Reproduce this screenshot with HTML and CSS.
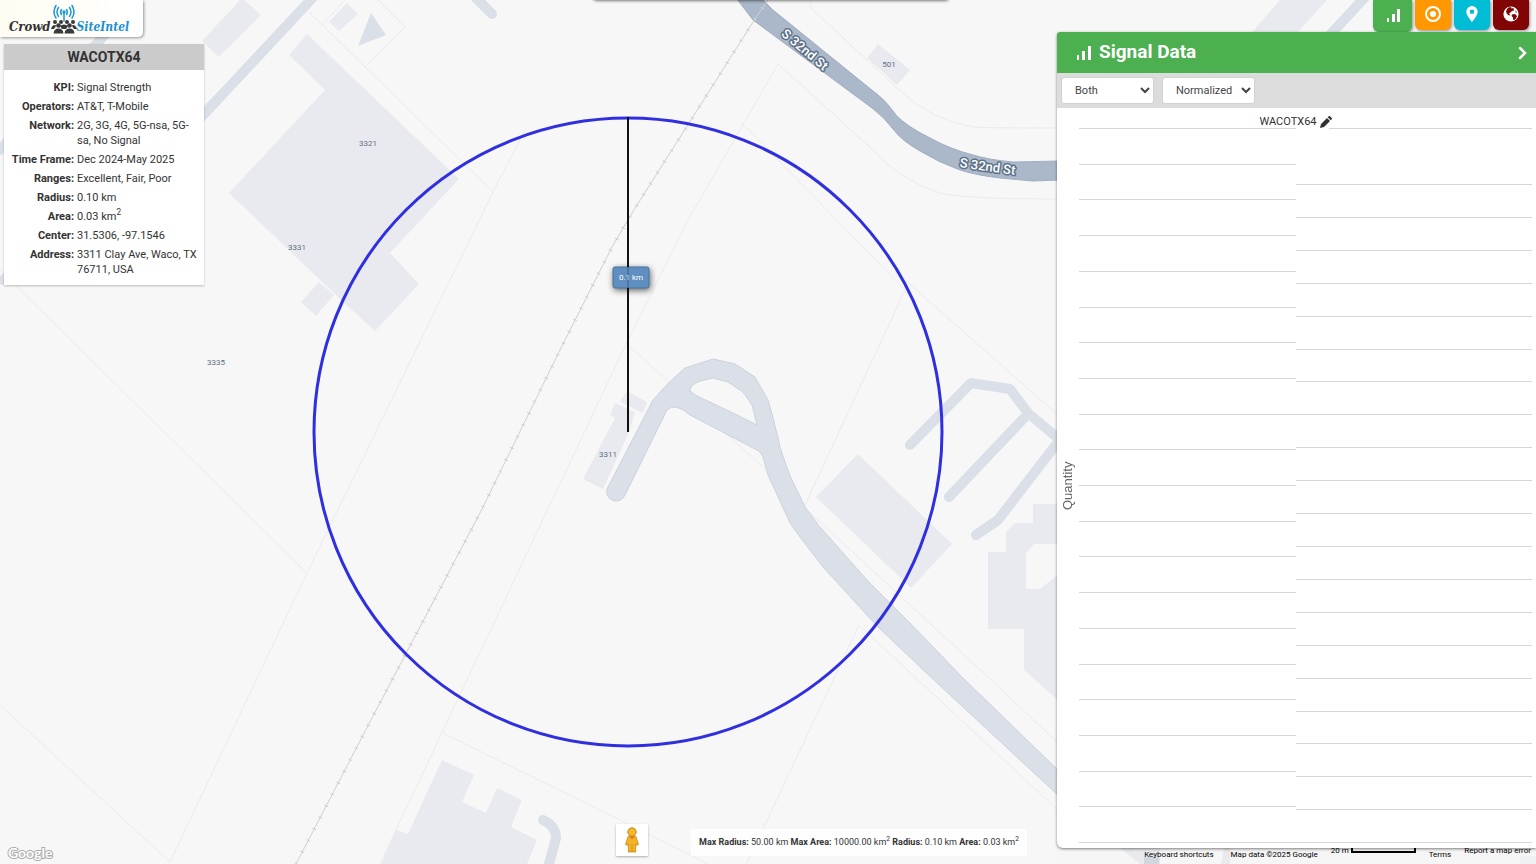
FILE: index.html
```html
<!DOCTYPE html>
<html lang="en">
<head>
<meta charset="utf-8">
<title>Crowd SiteIntel</title>
<link rel="stylesheet" href="styles.css">
</head>
<body>
<div class="app">
  <svg class="map" viewBox="0 0 1536 864" preserveAspectRatio="xMinYMin slice" role="img" aria-label="Map">
    <g class="parcels">
      <path d="M310 13L493 192L307 573L170 862L0 705M0 270L307 573M378 0L405 27L367 65M322 25L345 0M205 105L262 48M525 130L493 192"/>
      <path d="M778 64L688 220L628 340L448 720L380 864M443 733L620 820L710 865M628 345L805 505L905 290L742 123M905 280L1060 417M807 510L988 677L1060 745M747 863L859 625L918 680L1060 812"/>
      <path d="M812 -2L810 7L897 88Q930 120 973 127Q980 128 1060 128M778 64L873 150Q900 180 940 193Q965 199 1060 199"/>
    </g>
    <g class="buildings">
      <path d="M307 34L289 55L325 90L229 193L338 297L375 331L419 284L390 253L459 179Z"/>
      <path d="M319 282L334 295L316 316L301 302ZM242 -2L261 15L219 57L202 41ZM347 3L358 14L339 31L329 22Z"/>
      <path d="M878 44L910 70L897 85L867 58ZM858 454L952 544L911 588L816 497Z"/>
      <path d="M615 403L635 412L632 422L630 430L603 489L583 479L615 418L610 415ZM627 391L647 402L643 413L620 402Z"/>
      <path d="M1060 504H1033V523H1015L1006 532V552H988V629H1024V670L1060 702V573L1040 589H1026V553L1034 544H1060Z"/>
      <path d="M442 760L474 775L462 802L486 813L497 788L522 800L511 827L537 840L527 864H381L396 830L408 834Z"/>
      <path d="M1280 0H1327L1298 32H1252ZM1520 856H1536V864H1520Z"/>
    </g>
    <path class="block" d="M371 13L386 35L358 46ZM1120 848H1160V864H1140ZM1224 848H1230V864H1221Z"/>
    <g class="lanes">
      <path d="M318 -8L150 172L3 280M150 -15L0 150M470 -8L492 14M543 820Q556 826 556 838L548 868M1367 -5L1330 35"/>
      <path d="M910 445L971 383L1010 389L1028 413L1060 440M949 497L1025 417M976 535L998 520L1058 442"/>
    </g>
    <path class="drive" fill-rule="evenodd" d="M607 489L653 400Q668 382 685 368L713 359L735 364L755 377L768 400Q774 420 780 447Q786 466 791 478L805 507L820 527L867 580L910 623L962 677L1060 772V797L936 682L878 627L823 567L800 537L790 523L768 475L763 457Q761 451 755 449L690 415Q675 402 667 410L625 495A9.500 9.500 0 0 1 607 489ZM690 391Q690 385 700 381L713 378L728 382L743 392L752 405L757 425L733 413L697 396Z"/>
    <path class="road" d="M737 -1H762L773 10L878 95Q886 101 896 115Q906 126 930 138Q950 149 973 155Q990 160 1013 162L1060 161V180L1033 181L1000 178Q975 175 960 170Q938 162 920 151Q902 141 893 129Q884 117 872 108L753 20Z"/>
    <path class="rail" d="M770 -3L753 22L632 213L612 247L560 350L480 513L372 718L296 864"/>
    <path class="ties" d="M770 -3L753 22L632 213L612 247L560 350L480 513L372 718L296 864"/>
    <rect class="shield" x="1144" y="857" width="15" height="10"/>
    <g class="numbers">
      <text x="368" y="146">3321</text>
      <text x="297" y="250">3331</text>
      <text x="216" y="365">3335</text>
      <text x="608" y="457">3311</text>
      <text x="889" y="67">501</text>
    </g>
    <g class="streets">
      <text transform="translate(802 53) rotate(40)">S 32nd St</text>
      <text transform="translate(987 171) rotate(8)">S 32nd St</text>
    </g>
    <circle class="area" cx="628" cy="432" r="314"/>
    <rect class="measure" x="613" y="267" width="36" height="21" rx="2"/>
    <text class="measure-text" x="631" y="280">0.1 km</text>
    <path class="radius" d="M628 117V267M628 288V432"/>
    <path class="radius radius-under" d="M628 267V288"/>
  </svg>

  <div class="search-edge"></div>

  <div class="left">
    <a class="logo" href="#" aria-label="Crowd SiteIntel">
      <span class="logo-crowd">Crowd</span>
      <svg class="logo-mark" viewBox="0 0 26 30">
        <g fill="none" stroke="#1c97d4" stroke-width="1.500" stroke-linecap="round">
          <path d="M13 9V17M10.500 5.500Q8.800 8 10.500 10.500M15.500 5.500Q17.200 8 15.500 10.500M7.500 3.500Q4.500 8 7.500 12.500M18.500 3.500Q21.500 8 18.500 12.500M5 1.500Q1 8 5 14M21 1.500Q25 8 21 14"/>
        </g>
        <circle cx="13" cy="8" r="1.700" fill="#1c97d4"/>
        <g fill="#3a3a3c">
          <circle cx="4" cy="18" r="2"/><circle cx="10" cy="18" r="2"/><circle cx="16" cy="18" r="2"/><circle cx="22" cy="18" r="2"/>
          <path d="M0 25Q1 21 4 21Q5 21 5 22L3 25ZM26 25Q25 21 22 21Q21 21 21 22L23 25ZM9 22Q13 19 17 22L15 25H11Z"/>
          <circle cx="7.500" cy="21.500" r="2.300"/><circle cx="18.500" cy="21.500" r="2.300"/>
          <path d="M2.500 29.500Q3 24.500 7.500 24.500T12.500 29.500ZM13.500 29.500Q14 24.500 18.500 24.500T23.500 29.500Z"/>
        </g>
      </svg>
      <span class="logo-site">SiteIntel</span>
    </a>
    <section class="card">
      <h1 class="card-title">WACOTX64</h1>
      <dl class="facts">
        <dt>KPI:</dt><dd>Signal Strength</dd>
        <dt>Operators:</dt><dd>AT&amp;T, T-Mobile</dd>
        <dt>Network:</dt><dd>2G, 3G, 4G, 5G-nsa, 5G-sa, No Signal</dd>
        <dt>Time Frame:</dt><dd>Dec 2024-May 2025</dd>
        <dt>Ranges:</dt><dd>Excellent, Fair, Poor</dd>
        <dt>Radius:</dt><dd>0.10 km</dd>
        <dt>Area:</dt><dd>0.03 km<sup>2</sup></dd>
        <dt>Center:</dt><dd>31.5306, -97.1546</dd>
        <dt>Address:</dt><dd>3311 Clay Ave, Waco, TX 76711, USA</dd>
      </dl>
    </section>
    <a class="google" href="#">Google</a>
  </div>

  <div class="middle">
    <button class="pegman" type="button" aria-label="Street View">
      <svg viewBox="0 0 16 26" width="16" height="26">
        <path d="M4 9.500Q8 7.500 12 9.500L14.500 17.500L12.500 18.300L11.700 16.500V25H4.300V16.500L3.500 18.300L1.500 17.500Z" fill="#f5b324" stroke="#b98318" stroke-width=".7"/>
        <path d="M8 17V25" stroke="#c98a1a" stroke-width=".8"/>
        <path d="M5 9.500L8 12.500L11 9.500Z" fill="#e07b2a"/>
        <circle cx="8" cy="5" r="4.200" fill="#f8b825" stroke="#a97b20" stroke-width=".8"/>
      </svg>
    </button>
    <p class="limits"><b>Max Radius:</b> 50.00 km <b>Max Area:</b> 10000.00 km<sup>2</sup> <b>Radius:</b> 0.10 km <b>Area:</b> 0.03 km<sup>2</sup></p>
  </div>

  <div class="right">
    <nav class="tabs" aria-label="Panels">
      <button class="tab tab-signal" type="button" aria-label="Signal data">
        <svg viewBox="0 0 16 16"><path d="M2 11h2v4H2zM7 7h3v8H7zM12 2h3v13h-3z" fill="#fff"/></svg>
      </button>
      <button class="tab tab-target" type="button" aria-label="Target">
        <svg viewBox="0 0 16 16"><circle cx="8" cy="8" r="7" fill="none" stroke="#fff" stroke-width="2"/><circle cx="8" cy="8" r="3" fill="#fff"/></svg>
      </button>
      <button class="tab tab-pin" type="button" aria-label="Location">
        <svg viewBox="0 0 16 16"><path fill-rule="evenodd" d="M8 0a5.700 5.700 0 0 0-5.700 5.700C2.300 9.500 8 16 8 16s5.700-6.500 5.700-10.300A5.700 5.700 0 0 0 8 0zm0 8a2.300 2.300 0 1 1 0-4.600A2.300 2.300 0 0 1 8 8z" fill="#fff"/></svg>
      </button>
      <button class="tab tab-globe" type="button" aria-label="Global">
        <svg viewBox="0 0 16 16"><circle cx="8" cy="8" r="7.600" fill="#fff"/><path d="M5.500 1.500L8 1L8.500 2.500L10.500 2L11 4.500L9 5L7.500 6.500L6 7.500L7.500 9L6 9.500L4 8L3 5.500L4 3ZM9 8.500L12 8L14 10L13 12.500L11.500 14L10 13.500V11.500L8.500 10ZM12 4.500L14 6L13 6.800Z" fill="#820505"/></svg>
      </button>
    </nav>
    <section class="panel">
      <header class="panel-head">
        <svg class="bars" viewBox="0 0 16 16"><path d="M1 10h2v5H1zM6 6h3v9H6zM12 1h3v14h-3z" fill="#fff"/></svg>
        <h2 class="panel-title">Signal Data</h2>
        <button class="collapse" type="button" aria-label="Collapse panel">
          <svg viewBox="0 0 10 14"><path d="M2 2l5 5-5 5" fill="none" stroke="#fff" stroke-width="2.500" stroke-linecap="round"/></svg>
        </button>
      </header>
      <div class="toolbar">
        <select class="pick" aria-label="Operators"><option>Both</option></select>
        <select class="pick" aria-label="Scale"><option>Normalized</option></select>
      </div>
      <div class="chart">
        <div class="chart-name">WACOTX64
          <svg viewBox="0 0 12 12"><path d="M0 12l1-4 6-6 3 3-6 6zM7.700 1.300l1-1Q9.400-.2 10 .3L11.700 2q.5.600 0 1.300l-1 1z" fill="#333"/></svg>
        </div>
        <div class="plot">
          <div class="axis">Quantity</div>
          <div class="grid">
            <i></i><i></i><i></i><i></i><i></i><i></i><i></i><i></i><i></i><i></i>
            <i></i><i></i><i></i><i></i><i></i><i></i><i></i><i></i><i></i><i></i>
          </div>
          <div class="grid grid-right">
            <i class="lead"></i>
            <i></i><i></i><i></i><i></i><i></i><i></i><i></i><i></i><i></i><i></i>
            <i></i><i></i><i></i><i></i><i></i><i></i><i></i><i></i><i></i><i></i>
          </div>
        </div>
      </div>
    </section>
    <footer class="credits">
      <button class="credit low" type="button">Keyboard shortcuts</button>
      <span class="credit low data">Map data ©2025 Google</span>
      <span class="credit scale">20 m <span class="scale-bar"></span></span>
      <a class="credit low" href="#">Terms</a>
      <a class="credit" href="#">Report a map error</a>
    </footer>
  </div>
</div>
</body>
</html>
```
FILE: styles.css
```css
* { box-sizing: border-box; }
body {
  margin: 0;
  font-family: Roboto, "Liberation Sans", sans-serif;
  font-size: 11px;
  color: #333;
}
button { border: 0; padding: 0; background: none; font: inherit; color: inherit; cursor: pointer; }
a { color: inherit; text-decoration: none; }
.app {
  position: relative;
  display: grid;
  grid-template-columns: 204px 1fr 480px;
  height: 100vh;
  overflow: hidden;
  background: #f7f7f7;
}

/* Map */
.map { position: absolute; inset: 0; width: 100%; height: 100%; }
.parcels { fill: none; stroke: #ebebec; stroke-width: 1; }
.buildings { fill: #e8eaef; }
.block { fill: #dbdfe7; }
.lanes { fill: none; stroke: #dbdfe8; stroke-width: 10; stroke-linecap: round; stroke-linejoin: round; }
.drive { fill: #dbdfe8; stroke: #ccd2dc; stroke-width: 1; }
.road { fill: #aab8c9; stroke: #a0afc1; stroke-width: 1; }
.rail { fill: none; stroke: #cfcfd1; stroke-width: 1; }
.ties { fill: none; stroke: #cfcfd1; stroke-width: 4; stroke-dasharray: 1 12; }
.shield { fill: #aab8c9; }
.numbers { font-size: 8px; text-anchor: middle; fill: #5f7084; }
.streets { font-size: 13px; font-weight: 500; text-anchor: middle; fill: #fff; stroke: #5d7189; stroke-width: 3px; stroke-linejoin: round; paint-order: stroke; }
.area { fill: none; stroke: #2f2fe0; stroke-width: 3; }
.radius { stroke: #111; stroke-width: 2; }
.radius-under { opacity: .2; }
.measure { fill: #5f8fc0; stroke: #47749f; stroke-width: 1; filter: drop-shadow(1px 2px 3px rgba(0, 0, 0, .6)); }
.measure-text { font-size: 8px; text-anchor: middle; fill: #fff; }
.search-edge {
  position: absolute;
  top: -10px;
  left: 594px;
  right: 588px;
  height: 10px;
  border-radius: 3px;
  background: #fff;
  box-shadow: 0 0 3px 1px rgba(0, 0, 0, .5);
}

/* Left column */
.left { position: relative; display: flex; flex-direction: column; align-items: flex-start; }
.logo {
  display: flex;
  align-items: flex-end;
  width: 143px;
  height: 37px;
  padding: 0 9px 3px;
  border-radius: 0 0 5px 0;
  background: linear-gradient(90deg, #fffdf2, #fff);
  box-shadow: 1px 1px 3px rgba(0, 0, 0, .4);
  font-family: "DejaVu Serif Condensed", "DejaVu Serif", serif;
  font-weight: bold;
  font-style: italic;
  line-height: 14px;
}
.logo-crowd { font-size: 13px; }
.logo-site { font-size: 12px; color: #1b8fd0; }
.logo-mark { width: 26px; height: 30px; flex: none; }
.card {
  width: 200px;
  margin: 7px 0 0 4px;
  background: #fff;
  box-shadow: 0 1px 2px rgba(0, 0, 0, .25);
}
.card-title { margin: 0; background: #cbcbcb; font-size: 14px; font-weight: 700; line-height: 26px; text-align: center; }
.facts {
  display: grid;
  grid-template-columns: 70px 1fr;
  gap: 4px 3px;
  margin: 0;
  padding: 10px 4px 8px 0;
  line-height: 15px;
}
.facts dt { font-weight: 700; text-align: right; white-space: nowrap; }
.facts dd { margin: 0; }
sup { font-size: 75%; line-height: 0; }
.google {
  margin: auto 0 0 8px;
  font-family: Lato, sans-serif;
  font-size: 14px;
  font-weight: 700;
  line-height: 22px;
  color: #fff;
  -webkit-text-stroke: 2px #aaa;
  paint-order: stroke fill;
}

/* Bottom strip */
.middle { position: relative; display: flex; align-items: flex-end; justify-content: flex-end; gap: 43px; padding: 0 29px 8px 0; }
.pegman { display: grid; place-items: center; width: 32px; height: 32px; background: #fff; box-shadow: 0 1px 2px rgba(0, 0, 0, .3); }
.limits { margin: 0; padding: 0 8px; background: rgba(255, 255, 255, .8); font-size: 9px; line-height: 27px; white-space: nowrap; }

/* Right column */
.right { position: relative; display: flex; flex-direction: column; min-width: 0; }
.tabs { display: flex; align-items: flex-start; justify-content: flex-end; gap: 3px; height: 32px; padding-right: 7px; }
.tab { display: grid; place-items: center; width: 36px; height: 30px; padding-bottom: 2px; border-radius: 0 0 6px 6px; box-shadow: 1px 1px 3px rgba(0, 0, 0, .4); }
.tab svg { width: 16px; height: 16px; }
.tab-signal { width: 39px; height: 32px; background: #4caf50; }
.tab-target { background: #ff9800; }
.tab-pin { background: #00bcd4; }
.tab-globe { background: #820505; }
.panel {
  position: relative;
  z-index: 1;
  flex: 1;
  display: flex;
  flex-direction: column;
  min-height: 0;
  border-radius: 3px 0 0 6px;
  overflow: hidden;
  margin-left: 1px;
  background: #fff;
  box-shadow: 0 1px 3px rgba(0, 0, 0, .5);
}
.panel-head { display: flex; align-items: center; height: 41px; padding: 0 8px 0 19px; background: #4caf50; color: #fff; }
.bars { width: 16px; height: 16px; margin-right: 7px; }
.panel-title { margin: 0; padding-bottom: 2px; font-size: 19px; font-weight: 700; line-height: 38px; }
.collapse { margin-left: auto; }
.collapse svg { display: block; width: 10px; height: 14px; }
.toolbar { display: flex; align-items: center; gap: 8px; height: 35px; padding: 0 4px; background: #dcdcdc; }
.pick {
  width: 93px;
  height: 27px;
  padding: 0 0 0 9px;
  border: 1px solid #d2d2d2;
  border-radius: 3px;
  background: #fff;
  color: #444;
  font: 11px Roboto, sans-serif;
}
.chart { flex: 1; display: flex; flex-direction: column; min-height: 0; padding: 0 4px 5px; }
.chart-name { display: flex; align-items: flex-end; justify-content: center; gap: 3px; height: 20px; padding-right: 2px; line-height: 12px; }
.chart-name svg { width: 12px; height: 12px; }
.plot { flex: 1; display: flex; min-height: 0; }
.axis { width: 14px; margin-right: 4px; writing-mode: vertical-rl; transform: rotate(180deg); text-align: center; font: 13px/14px "Liberation Sans", sans-serif; color: #666; }
.grid { flex: 217; display: flex; flex-direction: column; border-bottom: 1px solid #d6d6d6; }
.grid i { flex: 1; border-top: 1px solid #d6d6d6; }
.grid-right { flex: 236; }
.grid-right .lead { flex: 0 0 56px; margin-left: 33px; }
.credits { display: flex; justify-content: flex-end; gap: 13px; height: 18px; margin-top: -2px; padding-right: 5px; background: rgba(245, 245, 245, .5); font-size: 8px; line-height: 9px; color: #000; white-space: nowrap; }
.credit { align-self: flex-start; }
.low { align-self: flex-end; padding-bottom: 5px; }
.data { margin-left: 4px; }
.scale { display: flex; gap: 2px; }
.scale-bar { width: 65px; height: 7px; border: 2px solid #000; border-top: 0; }
```
